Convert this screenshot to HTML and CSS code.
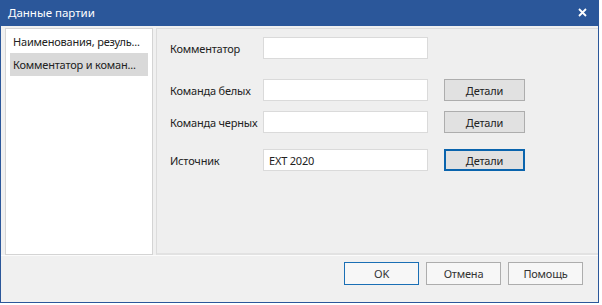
FILE: index.html
```html
<!DOCTYPE html>
<html lang="ru">
<head>
  <meta charset="UTF-8" />
  <meta name="viewport" content="width=device-width, initial-scale=1.0"/>
  <title>Данные партии</title>
  <link rel="stylesheet" href="styles.css">
</head>
<body>

<div class="dialog">
  <div class="titlebar">
    <span class="title">Данные партии</span>
    <svg class="close" width="9" height="9" viewBox="0 0 9 9">
      <path d="M1 1 L8 8 M8 1 L1 8" stroke="#fff" stroke-width="1.8" fill="none"/>
    </svg>
  </div>

  <div class="content">
    <div class="nav">
      <div class="nav-item">Наименования, резуль...</div>
      <div class="nav-item selected">Комментатор и коман...</div>
    </div>

    <div class="panel">
      <div class="row first">
        <label class="label">Комментатор</label>
        <input class="field" type="text">
      </div>
      <div class="row gap-big">
        <label class="label">Команда белых</label>
        <input class="field" type="text">
        <button class="details">Детали</button>
      </div>
      <div class="row">
        <label class="label">Команда черных</label>
        <input class="field" type="text">
        <button class="details">Детали</button>
      </div>
      <div class="row gap-mid">
        <label class="label">Источник</label>
        <input class="field" type="text" value="EXT 2020">
        <button class="details focused">Детали</button>
      </div>
    </div>
  </div>

  <div class="footer">
    <button class="btn default">OK</button>
    <button class="btn">Отмена</button>
    <button class="btn">Помощь</button>
  </div>
</div>

</body>
</html>
```

FILE: styles.css
```css
body {
  margin: 0;
  background-color: white;
  font-family: 'Noto Sans', 'Open Sans', sans-serif;
  font-size: 11px;
  letter-spacing: -0.2px;
  color: #222;
}
.dialog {
  width: 599px;
  height: 303px;
  box-sizing: border-box;
  border: 1px solid #2b579a;
  border-top: none;
  background: #f0f0f0;
  display: flex;
  flex-direction: column;
}
.titlebar {
  height: 26px;
  background: #2b579a;
  color: white;
  display: flex;
  align-items: center;
  justify-content: space-between;
  padding: 0 11px 0 7px;
  flex-shrink: 0;
}
.title {
  font-size: 11.5px;
  letter-spacing: 0;
  margin-top: -1px;
}
.close {
  margin-top: -2px;
}
.content {
  display: flex;
  padding: 2px 0 0 4px;
  height: 227px;
}
.nav {
  width: 148px;
  box-sizing: border-box;
  background: white;
  border: 1px solid #d4d4d4;
  padding: 1px 4px;
  margin-right: 3px;
}
.nav-item {
  height: 23px;
  line-height: 23px;
  padding-left: 3px;
  white-space: nowrap;
  overflow: hidden;
}
.nav-item.selected {
  background: #d9d9d9;
}
.panel {
  flex: 1;
  border: 1px solid #dcdcdc;
  border-right: none;
  border-bottom: 2px solid #e2e2e2;
  background: #efefef;
  padding: 8px 0 0 13px;
}
.row {
  display: flex;
  align-items: center;
  margin-top: 10px;
}
.row.first {
  margin-top: 0;
}
.row.gap-big {
  margin-top: 20px;
}
.row.gap-mid {
  margin-top: 16px;
}
.label {
  width: 93px;
  white-space: nowrap;
}
.field {
  width: 165px;
  height: 22px;
  box-sizing: border-box;
  border: 1px solid #dadada;
  background: white;
  font-family: inherit;
  font-size: 11px;
  letter-spacing: -0.2px;
  padding: 0 5px;
  margin-right: 16px;
  color: #222;
}
.details {
  width: 81px;
  height: 22px;
  box-sizing: border-box;
  background: #e1e1e1;
  border: 1px solid #adadad;
  font-family: inherit;
  font-size: 11px;
  letter-spacing: -0.2px;
  color: #222;
  padding: 0;
}
.details.focused {
  border: 2px solid #0a64ad;
}
.footer {
  flex: 1;
  border-top: 1px solid #fbfbfb;
  display: flex;
  justify-content: flex-end;
  align-items: flex-start;
  gap: 7px;
  padding: 6px 15px 0 0;
}
.btn {
  width: 75px;
  height: 23px;
  box-sizing: border-box;
  background: #f7f7f7;
  border: 1px solid #adadad;
  font-family: inherit;
  font-size: 11px;
  letter-spacing: -0.2px;
  color: #333;
  padding: 0;
}
.btn.default {
  border-color: #1a6fb5;
}
```
